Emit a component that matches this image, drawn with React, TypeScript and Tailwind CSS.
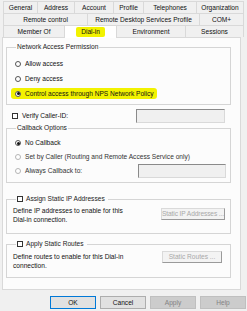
import type { ReactNode } from "react";

// Windows "Dial-in" property sheet, scaled down.

const rows: { label: string; w: string; active?: boolean }[][] = [
  [
    { label: "General", w: "w-[34px]" },
    { label: "Address", w: "w-[37px]" },
    { label: "Account", w: "w-[39px]" },
    { label: "Profile", w: "w-[30px]" },
    { label: "Telephones", w: "w-[53px]" },
    { label: "Organization", w: "w-[48px]" },
  ],
  [
    { label: "Remote control", w: "w-[84px]" },
    { label: "Remote Desktop Services Profile", w: "w-[112px]" },
    { label: "COM+", w: "w-[45px]" },
  ],
  [
    { label: "Member Of", w: "w-[61px]" },
    { label: "Dial-in", w: "w-[52px]", active: true },
    { label: "Environment", w: "w-[69px]" },
    { label: "Sessions", w: "w-[59px]" },
  ],
];

function Radio({ checked, disabled }: { checked?: boolean; disabled?: boolean }) {
  return (
    <span
      className={
        "flex h-[6px] w-[6px] shrink-0 items-center justify-center rounded-full border bg-white " +
        (disabled ? "border-[#b5b5b5]" : "border-[#555]")
      }
    >
      {checked && <span className="h-[3px] w-[3px] rounded-full bg-[#111]" />}
    </span>
  );
}

function Check() {
  return <span className="h-[6px] w-[6px] shrink-0 border border-[#333] bg-white" />;
}

function Group({ legend, children, className }: { legend: ReactNode; children: ReactNode; className?: string }) {
  return (
    <fieldset className={"w-[225px] border border-[#d5d5d5] px-[5px] " + (className ?? "")}>
      <legend className="ml-[4px] flex items-center gap-[3px] px-[1px] leading-[8px] text-[#222]">{legend}</legend>
      {children}
    </fieldset>
  );
}

function Field({ className }: { className?: string }) {
  return (
    <span
      className={
        "block h-[14px] border border-t-[#8a8a8a] border-l-[#8a8a8a] border-b-[#d9d9d9] border-r-[#d9d9d9] bg-[#f0f0f0] " +
        (className ?? "")
      }
    />
  );
}

function DisabledButton({ label, className }: { label: string; className?: string }) {
  return (
    <span
      className={
        "flex h-[12px] items-center justify-center whitespace-nowrap border border-[#dadada] border-b-[#9a9a9a] border-r-[#9a9a9a] bg-[#f3f3f3] text-[#a8a8a8] " +
        (className ?? "")
      }
    >
      {label}
    </span>
  );
}

export default function App() {
  return (
    <div
      className="h-[311px] w-[247px] overflow-hidden bg-[#f0f0f0] text-[6.6px] leading-[8px] text-[#111]"
      style={{ fontFamily: '"Liberation Sans", Arial, sans-serif' }}
    >
      <div className="pl-[3px] pt-[1px]">
        {rows.map((row, i) => (
          <div key={i} className="flex">
            {row.map((tab) => (
              <div
                key={tab.label}
                className={
                  "flex h-[12px] items-center justify-center border-l border-t border-[#d9d9d9] last:border-r " +
                  tab.w +
                  (tab.active ? " relative z-10 -mb-px h-[13px] bg-white" : " bg-[#f0f0f0]")
                }
              >
                <span className={tab.active ? "rounded-[2px] bg-[#f2f200] px-[5px] py-[1px]" : ""}>{tab.label}</span>
              </div>
            ))}
          </div>
        ))}
      </div>

      <div className="ml-[2px] h-[253px] w-[239px] border border-[#d9d9d9] bg-[#fcfcfc] pl-[3px] pt-[5px]">
        <Group legend="Network Access Permission" className="pb-[3px]">
          <div className="mt-[5px] flex h-[15px] items-center gap-[4px] pl-[3px]">
            <Radio />
            <span>Allow access</span>
          </div>
          <div className="flex h-[15px] items-center gap-[4px] pl-[3px]">
            <Radio />
            <span>Deny access</span>
          </div>
          <div className="flex h-[15px] items-center">
            <span className="-ml-[1px] flex h-[11px] items-center gap-[4px] rounded-[3px] bg-[#f2f200] pl-[4px] pr-[3px]">
              <Radio checked />
              <span>Control access through NPS Network Policy</span>
            </span>
          </div>
        </Group>

        <div className="mt-[3px] flex h-[15px] w-[225px] items-center pl-[6px]">
          <Check />
          <span className="ml-[4px]">Verify Caller-ID:</span>
          <Field className="ml-auto mr-[6px] w-[89px]" />
        </div>

        <Group legend="Callback Options" className="mt-[1px] pb-[4px]">
          <div className="mt-[4px] flex h-[14px] items-center gap-[4px] pl-[3px]">
            <Radio checked />
            <span>No Callback</span>
          </div>
          <div className="flex h-[14px] items-center gap-[4px] pl-[3px] text-[#333]">
            <Radio disabled />
            <span>Set by Caller (Routing and Remote Access Service only)</span>
          </div>
          <div className="flex h-[14px] items-center gap-[4px] pl-[3px] text-[#333]">
            <Radio disabled />
            <span>Always Callback to:</span>
            <Field className="ml-auto mr-[-1px] w-[88px]" />
          </div>
        </Group>

        <Group
          legend={
            <>
              <Check />
              <span className="pr-[2px]">Assign Static IP Addresses</span>
            </>
          }
          className="mt-[12px] pb-[9px]"
        >
          <div className="mt-[3px] flex items-start pl-[1px]">
            <div className="leading-[9px]">
              Define IP addresses to enable for this
              <br />
              Dial-in connection.
            </div>
            <DisabledButton label="Static IP Addresses ..." className="ml-auto mt-[2px] w-[64px] tracking-[-0.1px]" />
          </div>
        </Group>

        <Group
          legend={
            <>
              <Check />
              <span className="pr-[2px]">Apply Static Routes</span>
            </>
          }
          className="mt-[6px] pb-[7px]"
        >
          <div className="mt-[4px] flex items-start pl-[1px]">
            <div className="leading-[9px]">
              Define routes to enable for this Dial-in
              <br />
              connection.
            </div>
            <DisabledButton label="Static Routes ..." className="ml-auto mr-[3px] -mt-[1px] w-[60px]" />
          </div>
        </Group>
      </div>

      <div className="mt-[6px] flex gap-[4px] pl-[50px]">
        <span className="flex h-[13px] w-[46px] items-center justify-center border border-[#0078d7] bg-[#e1e1e1]">OK</span>
        <span className="flex h-[13px] w-[46px] items-center justify-center border border-[#adadad] bg-[#e1e1e1]">Cancel</span>
        <span className="flex h-[13px] w-[46px] items-center justify-center border border-[#bfbfbf] bg-[#cccccc] text-[#838383]">Apply</span>
        <span className="flex h-[13px] w-[46px] items-center justify-center border border-[#bfbfbf] bg-[#cccccc] text-[#838383]">Help</span>
      </div>
    </div>
  );
}
